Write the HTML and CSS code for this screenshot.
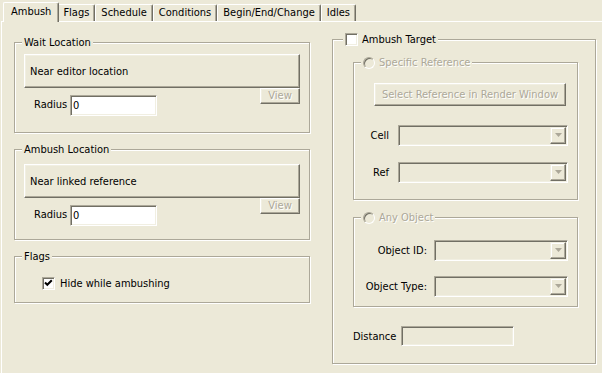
FILE: index.html
```html
<!DOCTYPE html>
<html lang="en">
<head>
    <meta charset="UTF-8">
    <title>Ambush Package</title>
    <link rel="stylesheet" href="styles.css">
</head>
<body>
    <div class="tabs">
        <span class="tab active">Ambush</span>
        <span class="tab">Flags</span>
        <span class="tab">Schedule</span>
        <span class="tab">Conditions</span>
        <span class="tab">Begin/End/Change</span>
        <span class="tab">Idles</span>
    </div>
    <div class="page">
        <div class="left">
            <fieldset class="group loc first">
                <legend>Wait Location</legend>
                <button class="btn wide">Near editor location</button>
                <div class="radius-row">
                    <label class="radius-label">Radius</label>
                    <input class="edit radius" type="text" value="0">
                    <button class="btn view" disabled>View</button>
                </div>
            </fieldset>
            <fieldset class="group loc second">
                <legend>Ambush Location</legend>
                <button class="btn wide">Near linked reference</button>
                <div class="radius-row">
                    <label class="radius-label">Radius</label>
                    <input class="edit radius" type="text" value="0">
                    <button class="btn view" disabled>View</button>
                </div>
            </fieldset>
            <fieldset class="group flags">
                <legend>Flags</legend>
                <label class="check-row">
                    <span class="check"><svg width="9" height="9" viewBox="0 0 9 9"><polyline points="1,3.5 3.3,5.8 7.8,1.3" fill="none" stroke="#000" stroke-width="2"/></svg></span>
                    Hide while ambushing
                </label>
            </fieldset>
        </div>
        <fieldset class="group target">
            <legend class="check-legend"><span class="check"></span>Ambush Target</legend>
            <fieldset class="group sub spec">
                <legend class="radio-legend"><span class="radio"></span>Specific Reference</legend>
                <button class="btn select" disabled>Select Reference in Render Window</button>
                <div class="field">
                    <span class="lbl">Cell</span>
                    <span class="combo"><span class="arrow"><svg width="7" height="5" viewBox="0 0 7 5"><polygon points="0,0 7,0 3.5,4" fill="#aca899"/></svg></span></span>
                </div>
                <div class="field">
                    <span class="lbl">Ref</span>
                    <span class="combo"><span class="arrow"><svg width="7" height="5" viewBox="0 0 7 5"><polygon points="0,0 7,0 3.5,4" fill="#aca899"/></svg></span></span>
                </div>
            </fieldset>
            <fieldset class="group sub any">
                <legend class="radio-legend"><span class="radio"></span>Any Object</legend>
                <div class="field">
                    <span class="lbl">Object ID:</span>
                    <span class="combo"><span class="arrow"><svg width="7" height="5" viewBox="0 0 7 5"><polygon points="0,0 7,0 3.5,4" fill="#aca899"/></svg></span></span>
                </div>
                <div class="field">
                    <span class="lbl">Object Type:</span>
                    <span class="combo"><span class="arrow"><svg width="7" height="5" viewBox="0 0 7 5"><polygon points="0,0 7,0 3.5,4" fill="#aca899"/></svg></span></span>
                </div>
            </fieldset>
            <div class="distance">
                <span class="lbl">Distance</span>
                <input class="edit dist" type="text" disabled>
            </div>
        </fieldset>
    </div>
</body>
</html>
```

FILE: styles.css
```css
body {
    margin: 0;
    width: 602px;
    height: 373px;
    overflow: hidden;
    background-color: #ece9d8;
    font-family: "DejaVu Sans Condensed", "Liberation Sans", Arial, sans-serif;
    font-size: 11px;
    line-height: 13px;
    color: #000;
}
.tabs {
    display: flex;
    align-items: flex-start;
    height: 21px;
    padding-left: 5px;
}
.tab {
    height: 17px;
    margin-top: 4px;
    padding: 0 5px;
    line-height: 16px;
    border: 1px solid #fff;
    border-bottom: none;
    border-right-color: #716f64;
    box-shadow: inset -1px 0 #aca899;
    border-radius: 2px 2px 0 0;
    box-sizing: border-box;
}
.tab.active {
    position: relative;
    z-index: 1;
    height: 20px;
    margin: 2px -2px 0;
    padding: 0 7px;
    line-height: 17px;
    background-color: #ece9d8;
}
.page {
    display: flex;
    align-items: flex-start;
    gap: 22px;
    height: 352px;
    margin-left: 1px;
    padding-left: 12px;
    border-top: 1px solid #fff;
    border-left: 1px solid #fff;
}
.left {
    width: 296px;
    margin-top: 14px;
}
.group {
    margin: 0;
    padding: 0;
    min-width: 0;
    border: 1px solid #aca899;
    box-shadow: inset 1px 1px #fff, 1px 1px #fff;
}
.group legend {
    margin-left: -2px;
    padding: 0 2px;
    line-height: 13px;
    background-color: #ece9d8;
}
.loc {
    padding: 8px 9px 13px;
}
.loc.first {
    padding-top: 5px;
    padding-bottom: 16px;
}
.loc.second {
    margin-top: 10px;
}
.flags {
    margin-top: 10px;
    padding: 14px 9px 12px;
}
.btn {
    font-family: inherit;
    font-size: 11px;
    color: #000;
    background-color: #ece9d8;
    border: 1px solid;
    border-color: #fff #716f64 #716f64 #fff;
    box-shadow: inset -1px -1px #aca899, inset 1px 1px #f1efe2;
    padding: 0;
    border-radius: 0;
}
.btn:disabled {
    color: #aca899;
    text-shadow: 1px 1px #fff;
}
.wide {
    display: block;
    width: 276px;
    height: 34px;
    text-align: left;
    padding-left: 5px;
}
.radius-row {
    display: flex;
    align-items: flex-start;
}
.radius-label {
    width: 36px;
    margin: 10px 0 0 10px;
}
.edit {
    box-sizing: border-box;
    height: 21px;
    margin: 0;
    padding: 0 2px;
    font-family: inherit;
    font-size: 11px;
    background-color: #fff;
    border: 1px solid;
    border-color: #aca899 #fff #fff #aca899;
    box-shadow: inset 1px 1px #716f64, inset -1px -1px #f1efe2;
    outline: none;
}
.radius {
    width: 87px;
    margin-top: 7px;
}
.view {
    width: 40px;
    height: 16px;
    margin-left: auto;
    line-height: 12px;
}
.check-row {
    display: flex;
    align-items: center;
    gap: 5px;
    margin-left: 18px;
}
.check {
    box-sizing: border-box;
    width: 13px;
    height: 13px;
    display: inline-flex;
    align-items: center;
    justify-content: center;
    background-color: #fff;
    border: 1px solid;
    border-color: #aca899 #fff #fff #aca899;
    box-shadow: inset 1px 1px #716f64, inset -1px -1px #f1efe2;
}
.target {
    width: 264px;
    box-sizing: border-box;
    margin-top: 10px;
    padding: 9px 17px 17px 20px;
}
.check-legend,
.radio-legend {
    display: flex;
    align-items: center;
    gap: 4px;
}
.group > .check-legend {
    margin-left: -10px;
    line-height: 15px;
}
.sub {
    width: 225px;
    box-sizing: border-box;
}
.radio-legend {
    color: #aca899;
    text-shadow: 1px 1px #fff;
}
.group > .radio-legend {
    margin-left: 7px;
}
.radio {
    box-sizing: border-box;
    width: 12px;
    height: 12px;
    border-radius: 50%;
    border: 1px solid;
    border-color: #aca899 #fff #fff #aca899;
    box-shadow: inset 1px 1px #716f64;
    background-color: #ece9d8;
}
.spec {
    padding: 14px 9px 16px 0;
}
.select {
    display: block;
    width: 192px;
    height: 23px;
    margin-left: 20px;
}
.field {
    display: flex;
    align-items: center;
}
.lbl {
    text-align: right;
}
.spec .lbl {
    width: 35px;
    margin-right: 9px;
}
.spec .field {
    margin-top: 19px;
}
.spec .field + .field {
    margin-top: 16px;
}
.combo {
    box-sizing: border-box;
    flex: 1;
    height: 21px;
    padding: 1px;
    display: flex;
    justify-content: flex-end;
    border: 1px solid;
    border-color: #aca899 #fff #fff #aca899;
    box-shadow: inset 1px 1px #716f64, inset -1px -1px #f1efe2;
}
.arrow {
    box-sizing: border-box;
    width: 16px;
    height: 17px;
    display: flex;
    align-items: center;
    justify-content: center;
    border: 1px solid;
    border-color: #f1efe2 #716f64 #716f64 #f1efe2;
    box-shadow: inset -1px -1px #aca899, inset 1px 1px #fff;
}
.any {
    margin-top: 11px;
    padding: 9px 9px 9px 0;
}
.any .lbl {
    width: 73px;
    margin-right: 7px;
}
.any .field {
    margin-top: 7px;
}
.any .field + .field {
    margin-top: 15px;
}
.distance {
    display: flex;
    align-items: center;
    margin-top: 19px;
}
.distance .lbl {
    width: 48px;
    text-align: left;
}
.dist {
    width: 113px;
    height: 20px;
    background-color: #ece9d8;
}
```
